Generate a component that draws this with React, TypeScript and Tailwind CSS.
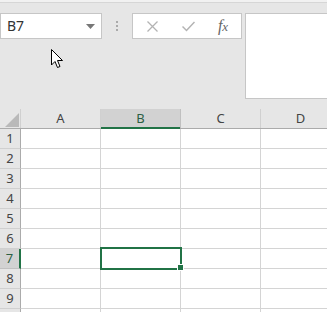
import React from "react";

const cols = ["A", "B", "C", "D"];
const rows = [1, 2, 3, 4, 5, 6, 7, 8, 9, 10];

export default function App() {
  return (
    <div
      className="relative w-[327px] h-[312px] overflow-hidden bg-[#e6e6e6] text-[#444]"
      style={{ fontFamily: '"Noto Sans", "Open Sans", sans-serif' }}
    >
      {/* top strip */}
      <div className="h-[3px] bg-[#f1f1f1] border-b border-[#d6d6d6]" />
      {/* toolbar */}
      <div className="h-[106px] flex items-start pt-[10px]">
        <div className="w-[102px] h-[26px] bg-white border border-[#c6c6c6] flex items-center justify-between pl-[6px] pr-[6px] shrink-0">
          <span className="text-[14px] leading-none text-[#333]">B7</span>
          <svg width="9" height="5" viewBox="0 0 9 5">
            <path d="M0 0 L9 0 L4.5 5 Z" fill="#777" />
          </svg>
        </div>
        <div className="w-[30px] h-[26px] flex flex-col items-center justify-center gap-[2px] shrink-0">
          <div className="w-[2px] h-[2px] bg-[#aaa]" />
          <div className="w-[2px] h-[2px] bg-[#aaa]" />
          <div className="w-[2px] h-[2px] bg-[#aaa]" />
        </div>
        <div className="w-[110px] h-[26px] bg-white border border-[#c6c6c6] flex items-center shrink-0">
          <div className="w-[38px] flex justify-center">
            <svg width="11" height="11" viewBox="0 0 11 11">
              <path d="M0.5 0.5 L10.5 10.5 M10.5 0.5 L0.5 10.5" stroke="#b3b3b3" strokeWidth="1.3" />
            </svg>
          </div>
          <div className="w-[34px] flex justify-center">
            <svg width="13" height="11" viewBox="0 0 13 11">
              <path d="M0.5 5.5 L4.5 9.5 L12.5 1" stroke="#b3b3b3" strokeWidth="1.5" fill="none" />
            </svg>
          </div>
          <div className="w-[36px] flex justify-center">
            <span
              className="text-[16px] italic leading-none text-[#666]"
              style={{ fontFamily: '"Liberation Serif", serif' }}
            >
              f<span className="text-[13px]">x</span>
            </span>
          </div>
        </div>
        <div className="ml-[3px] w-[90px] h-[86px] bg-white border border-[#c6c6c6] shrink-0" />
      </div>

      {/* grid */}
      <div className="flex flex-col">
        {/* header row */}
        <div className="flex h-[20px] border-b border-[#ababab]">
          <div className="w-[21px] shrink-0 border-r border-[#d0d0d0] relative">
            <svg className="absolute left-[5px] top-[4px]" width="14" height="14" viewBox="0 0 14 14">
              <path d="M14 0 L14 14 L0 14 Z" fill="#b9b9b9" />
            </svg>
          </div>
          {cols.map((c) => (
            <div
              key={c}
              className={
                c === "B"
                  ? "w-[80px] shrink-0 bg-[#d2d2d2] border-r border-[#c0c0c0] flex items-center justify-center text-[13px] text-[#2d5f43] relative"
                  : "w-[80px] shrink-0 border-r border-[#d0d0d0] flex items-center justify-center text-[13px] text-[#444]"
              }
            >
              {c}
              {c === "B" && <div className="absolute left-0 right-0 bottom-[-1px] h-[2px] bg-[#217346]" />}
            </div>
          ))}
        </div>
        {rows.map((r) => (
          <div key={r} className="flex h-[20px]">
            <div
              className={
                r === 7
                  ? "w-[21px] shrink-0 bg-[#d2d2d2] border-b border-[#c0c0c0] border-r-2 border-r-[#217346] flex items-center justify-center text-[13px] text-[#2d5f43]"
                  : "w-[21px] shrink-0 bg-[#e6e6e6] border-b border-[#d0d0d0] border-r border-r-[#ababab] flex items-center justify-center text-[13px] text-[#444]"
              }
            >
              {r < 10 ? r : ""}
            </div>
            {cols.map((c) => (
              <div
                key={c}
                className="w-[80px] shrink-0 bg-white border-b border-r border-[#d4d4d4] relative"
              >
                {r === 7 && c === "B" && (
                  <>
                    <div className="absolute z-10 left-[-1px] top-[-2px] w-[82px] h-[23px] border-2 border-[#217346]" />
                    <div className="absolute z-20 left-[76px] top-[15px] w-[7px] h-[7px] bg-[#217346] border border-white box-border" />
                  </>
                )}
              </div>
            ))}
          </div>
        ))}
      </div>

      {/* mouse cursor */}
      <svg className="absolute z-30 left-[51px] top-[49px]" width="13" height="20" viewBox="0 0 13 20">
        <path
          d="M0.5 0.5 L0.5 16 L4 12.5 L6.5 18.5 L9 17.5 L6.5 11.5 L11.5 11.5 Z"
          fill="white"
          stroke="black"
          strokeWidth="1"
          strokeLinejoin="round"
        />
      </svg>
    </div>
  );
}
